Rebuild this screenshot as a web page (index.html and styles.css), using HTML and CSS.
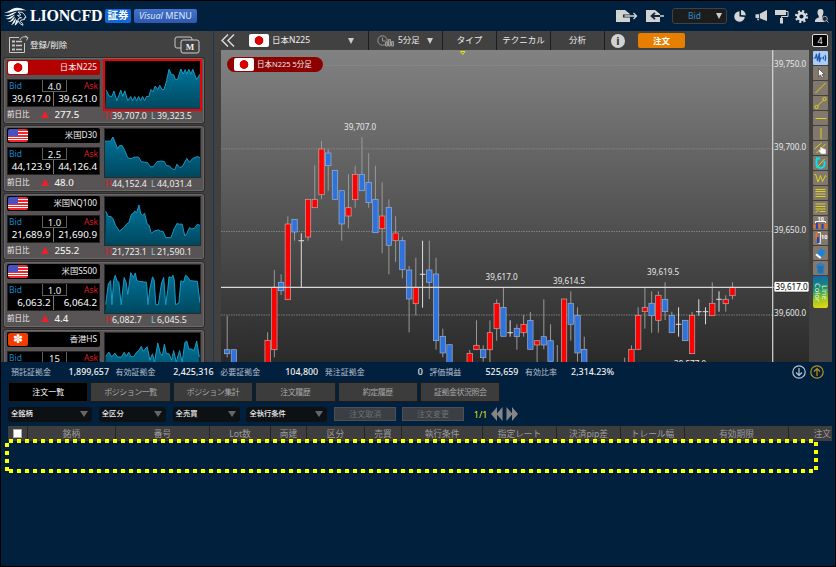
FILE: index.html
```html
<!DOCTYPE html>
<html lang="ja">
<head>
    <meta charset="UTF-8">
    <meta name="viewport" content="width=device-width, initial-scale=1.0">
    <title>LIONCFD証券</title>
    <link rel="stylesheet" href="styles.css">
</head>
<body>
    <div class="app">
        <header class="header">
            <svg class="lion" width="23" height="19" viewBox="0 0 23 19" fill="#f0f3f6">
                <path d="M0 5.500C5 5.500 7 1 13 .8c3.500 0 6 1.200 9.500 2.700C19 3 16 3 13.500 3.500 9 4.200 6 6.500 0 5.500z"/>
                <path d="M0 8.500c5 .5 8-3.500 13-3.800l-3 2C7 9 4 10 0 8.500z"/>
                <path d="M1.500 11.800C5 11.500 7 8.800 11 7.500L9 10c-2 2-4.500 2.800-7.500 1.800z"/>
                <path d="M4 15c3-.8 3.500-3.500 7-5.500l-1 2.500c-1.200 2-3 3.300-6 3z"/>
                <path d="M7 18c2-1.500 1.800-4.500 5-7l-.5 2.500C10.800 16 9.500 17.500 7 18z"/>
                <path d="M10.500 18.500c1-2 .6-4 2.500-6l1 2c-.3 2-1.500 3.500-3.500 4z"/>
                <path d="M14 5l4 .3 2.500 2.200 1.500 3-2 .5.600 1.500-3.600.5-.8 1.500 2.300 1.800.5 2-3.500-2-1.500-3 .5-1.800 3-.8-2-.5-2-1.700 3.500-.6z" fill="none" stroke="#f0f3f6" stroke-width=".9"/>
            </svg>
            <span class="brand">LIONCFD</span>
            <span class="brand-badge">証券</span>
            <span class="visual-menu"><i>Visual</i> MENU</span>
            <div class="header-tools">
                <svg class="t-out" width="22" height="14" viewBox="0 0 22 14"><path d="M0 1h9l5 4v8H0z" fill="#d2d2d2"/><path d="M7 7h8" stroke="#12273d" stroke-width="3"/><path d="M8.500 7h12M17.500 4l3 3-3 3" fill="none" stroke="#d2d2d2" stroke-width="1.300"/></svg>
                <svg class="t-in" width="19" height="14" viewBox="0 0 19 14"><path d="M0 1h9l5 4v8H0z" fill="#d2d2d2"/><path d="M6 7h8M9 3.800L5.500 7 9 10.200" fill="none" stroke="#12273d" stroke-width="1.800"/><path d="M14 7h4" stroke="#d2d2d2" stroke-width="1.500"/></svg>
                <div class="price-select"><span>Bid</span><b class="arrow"></b></div>
                <svg class="t-pie" width="12" height="12" viewBox="0 0 12 12" fill="#d6d6d6"><path d="M5.500 1.200V6.500l5.300.6A5.300 5.300 0 1 1 5.500 1.200z"/><path d="M7 0a5 5 0 0 1 4.600 5.400L7 5z"/></svg>
                <svg class="t-horn" width="13" height="12" viewBox="0 0 13 12" fill="#d2d2d2"><path d="M12 0v11L4.800 8.300V3.700z"/><path d="M.5 4.300h3.500v3.700H.5zM2 8.500h1.600l.6 1.800H2.600z"/></svg>
                <svg class="t-roller" width="14" height="15" viewBox="0 0 14 15" fill="#d2d2d2"><path d="M0 1h11v5H0z"/><path d="M11 2.500h2v5H6.500V9" fill="none" stroke="#d2d2d2"/><path d="M5 9h3v5.500H5z"/></svg>
                <svg class="t-gear" width="13" height="13" viewBox="0 0 13 13"><circle cx="6.500" cy="6.500" r="3.400" fill="none" stroke="#dcdcdc" stroke-width="2.600"/><circle cx="6.500" cy="6.500" r="5.400" fill="none" stroke="#dcdcdc" stroke-width="2.200" stroke-dasharray="2.100 2.140"/></svg>
                <svg class="t-user" width="14" height="14" viewBox="0 0 14 14"><path d="M5.500 0C8 0 8.600 1.600 8.400 3.500 8.200 5.500 7.600 6.300 7.300 7v1.500L9 9.500V13H0c0-3 .6-3.400 3.700-4.600V7C3 6 2.500 5 2.500 3.300 2.500 1.200 3.600 0 5.500 0z" fill="#d2d2d2"/><circle cx="9.800" cy="9.800" r="2.500" fill="#12273d" stroke="#aaa"/><path d="M11.500 11.500l2 2" stroke="#aaa"/></svg>
            </div>
        </header>

        <main class="main">
            <section class="watch">
                <div class="watch-head">
                    <svg width="21" height="19" viewBox="0 0 21 19" fill="none" stroke="#c8c8c8"><path d="M11 2.500H1.500v15h15V8"/><path d="M4 5.500h3v2H4zM4 9.500h3v2H4zM4 13.500h3v2H4z" fill="#c8c8c8" stroke="none"/><path d="M8 6.500h6M8 10.500h6M8 14.500h6" stroke-width="1.600"/><path d="M12 5c1-3 4-4 7.500-2.500M17 .8l3 1.800-1.500 2.800"/></svg>
                    <span>登録/削除</span>
                    <svg class="m-icon" width="27" height="18" viewBox="0 0 27 18"><rect x="1" y="1" width="17" height="11" rx="2" fill="#414141" stroke="#c8c8c8"/><rect x="7" y="4" width="18" height="13" rx="2" fill="#414141" stroke="#d0d0d0"/><text x="16" y="14" text-anchor="middle">M</text></svg>
                </div>
                <div class="cards" id="cards"></div>
            </section>

            <section class="chart-area">
                <div class="chart-bar">
                    <svg class="back" width="14" height="13" viewBox="0 0 14 13" fill="none" stroke="#ddd" stroke-width="1.400"><path d="M7 .5l-6 6 6 6M13 .5l-6 6 6 6"/></svg>
                    <div class="bar-item symbol"><i class="flag jp"></i><span>日本N225</span><b class="arrow"></b></div>
                    <div class="bar-item period">
                        <svg width="18" height="12" viewBox="0 0 18 12" fill="none" stroke="#999"><circle cx="5.500" cy="5.500" r="4.700"/><path d="M5.500 2.500v3.500h3"/><path d="M8.500 11V7h2v4zM11.500 11V4.500h2V11zM14.500 11V6.500h2V11z" fill="#666"/></svg>
                        <span>5分足</span><b class="arrow"></b>
                    </div>
                    <div class="bar-item type">タイプ</div>
                    <div class="bar-item type">テクニカル</div>
                    <div class="bar-item type">分析</div>
                    <span class="info">i</span>
                    <button class="order-btn">注文</button>
                    <span class="count">4</span>
                </div>
                <div class="chart-row">
                    <div class="chart">
                        <svg id="chart" width="588" height="312" viewBox="221 50 588 312"></svg>
                        <div class="chart-pill"><i class="flag jp"></i>日本N225 5分足</div>
                    </div>
                    <div class="draw-tools">
                        <svg class="on" viewBox="0 0 14 14"><path d="M0 7h2l1-4 1 7 2-8v9l1-4h2M10 5.500v3M11.500 4q1.500 3 0 6" stroke="#2257a8" stroke-width="1.200"/></svg>
                        <svg viewBox="0 0 14 14"><path d="M5 2.500v8l2-1.500 1.500 3 1.500-.8L8.500 8.500h2.500z" fill="#fff" stroke="#333" stroke-width=".6"/></svg>
                        <svg viewBox="0 0 14 14"><path d="M2 12L12 2"/></svg>
                        <svg viewBox="0 0 14 14"><path d="M4 10l6-6"/><circle cx="3" cy="11" r="1.600"/><circle cx="11" cy="3" r="1.600"/></svg>
                        <svg viewBox="0 0 14 14"><path d="M2 7.500h11"/></svg>
                        <svg viewBox="0 0 14 14"><path d="M7.500 2v11"/></svg>
                        <svg viewBox="0 0 14 14"><path d="M1 8l7-6M3 12l9-9"/><path d="M7 6.500l2 1 3 1v4H7.500L5.500 9.500h2z" fill="#fff" stroke="#fff" stroke-width=".5"/></svg>
                        <svg viewBox="0 0 14 14"><path d="M3 12l8-9"/><path d="M2.500 2.500h4M3 3v5a4 4 0 0 0 8 0V5" stroke="#00e5f0" stroke-width="2"/></svg>
                        <svg viewBox="0 0 14 14"><path d="M1 4l1-1 2.500 8L7 4.500l2 6 3-6 1 1"/></svg>
                        <svg viewBox="0 0 14 14"><path d="M2 3.500h10M2 5.500h10M2 8h10M2 10.500h10"/></svg>
                        <svg viewBox="0 0 14 14"><path d="M2 3h10M2 5.500h10M2 8h10M6 10.500h6M2 12l3-3"/></svg>
                        <svg viewBox="0 0 14 14"><path d="M2 7V5.500h10V7" stroke="#fff"/><path d="M3.500 7v6M9 8v5" stroke="#1c48c8" stroke-width="2"/><path d="M6 8v4M12 8v4M1 9v3" stroke="#ff6a13" stroke-width="2"/><text x="4" y="4.500">10</text></svg>
                        <svg viewBox="0 0 14 14"><path d="M4 1.500h3v11H5" stroke="#fff" stroke-width=".8"/><path d="M3 2v6" stroke="#ff6a13" stroke-width="2"/><path d="M4.500 6v6" stroke="#1c48c8" stroke-width="2"/><text x="7.500" y="8">10</text></svg>
                        <svg viewBox="0 0 14 14"><path d="M7.500 2L12 6l-4 5.500L3.500 7.500z" fill="#1584e0" stroke="none"/><path d="M3.500 7.500L8 11.500l-1.500 1.300L1.800 9z" fill="#fff" stroke="none"/></svg>
                        <svg viewBox="0 0 14 14"><path d="M3.500 4.500h7l-.8 8H4.300zM3 3.500h8M5.500 2.500h3" fill="#2a6ea8" stroke="#2f7fc0"/></svg>
                        <div class="line-color">Line<br>Color</div>
                    </div>
                </div>
            </section>
        </main>

        <section class="status">
            <div class="stat"><span>預託証拠金</span><b>1,899,657</b></div>
            <div class="stat"><span>有効証拠金</span><b>2,425,316</b></div>
            <div class="stat"><span>必要証拠金</span><b>104,800</b></div>
            <div class="stat"><span>発注証拠金</span><b>0</b></div>
            <div class="stat short"><span>評価損益</span><b>525,659</b></div>
            <div class="stat short"><span>有効比率</span><b>2,314.23%</b></div>
            <div class="updown">
                <svg width="14" height="14" viewBox="0 0 14 14" fill="none" stroke="#b8c6d6" stroke-width="1.200"><circle cx="7" cy="7" r="6.200"/><path d="M7 3v7.500M4 7.500l3 3 3-3"/></svg>
                <svg width="14" height="14" viewBox="0 0 14 14" fill="none" stroke="#b8901e" stroke-width="1.200"><circle cx="7" cy="7" r="6.200"/><path d="M7 11V3.500M4 6.500l3-3 3 3"/></svg>
            </div>
        </section>

        <nav class="tabs">
            <a class="tab active">注文一覧</a>
            <a class="tab">ポジション一覧</a>
            <a class="tab">ポジション集計</a>
            <a class="tab">注文履歴</a>
            <a class="tab">約定履歴</a>
            <a class="tab">証拠金状況照会</a>
        </nav>

        <div class="filters">
            <div class="select w84">全銘柄<b class="arrow"></b></div>
            <div class="select w67">全区分<b class="arrow"></b></div>
            <div class="select w67">全売買<b class="arrow"></b></div>
            <div class="select w81">全執行条件<b class="arrow"></b></div>
            <button class="off-btn">注文取消</button>
            <button class="off-btn">注文変更</button>
            <span class="page">1/1</span>
            <svg class="pager" width="27" height="14" viewBox="0 0 27 14" fill="#858585"><path d="M6 0v14L0 7zM11.500 0v14l-6-7zM15.500 0v14l6-7zM21 0v14l6-7z"/></svg>
        </div>

        <div class="orders">
            <div class="thead">
                <span><i class="check"></i></span><span>銘柄</span><span>番号</span><span>Lot数</span><span>両建</span><span>区分</span><span>売買</span><span>執行条件</span><span>指定レート</span><span>決済pip差</span><span>トレール幅</span><span>有効期限</span><span class="last">注文</span>
            </div>
            <svg class="marker" width="813" height="34" viewBox="0 0 813 34" stroke="#ffff00" stroke-width="4" stroke-dasharray="4 4">
                <path d="M4 2H808M4 32H808M2 4V32M811 3V31"/>
            </svg>
        </div>
    </div>
    <script src="script.js"></script>
</body>
</html>
```
FILE: styles.css
```css
* {
    margin: 0;
    padding: 0;
    box-sizing: border-box;
}

body {
    width: 836px;
    height: 567px;
    overflow: hidden;
    background: #000;
    font-family: "Noto Sans", "Noto Sans CJK JP", sans-serif;
    font-size: 8.5px;
    line-height: 1;
    color: #eee;
}

svg {
    display: block;
    flex: none;
}

.app {
    margin: 1px;
    width: 834px;
    height: 565px;
    background: #01203d;
    display: flex;
    flex-direction: column;
}

.arrow {
    width: 0;
    height: 0;
    border: 3.5px solid transparent;
    border-top: 6px solid #ccc;
    border-bottom: 0;
}

/* header */
.header {
    height: 30px;
    flex: none;
    display: flex;
    align-items: center;
    padding-left: 3px;
}

.brand {
    font: bold 16px/16px "Liberation Serif", serif;
    color: #fff;
    margin-left: 3px;
    width: 74px;
    letter-spacing: -0.2px;
}

.brand-badge {
    width: 26px;
    height: 14px;
    margin-left: 1px;
    border-radius: 2px;
    background: #1268d6;
    color: #fff;
    font-size: 10.5px;
    font-weight: bold;
    line-height: 13px;
    text-align: center;
}

.visual-menu {
    width: 63px;
    height: 14px;
    margin-left: 3px;
    border-radius: 2px;
    background: linear-gradient(#4474cc, #2d58b0);
    color: #dfe9f8;
    font-size: 9px;
    line-height: 14px;
    text-align: center;
    white-space: nowrap;
}

.header-tools {
    margin-left: auto;
    margin-right: 6px;
    display: flex;
    align-items: center;
}

.t-out { margin-right: 8px; }
.t-in { margin-right: 7px; }
.t-pie { margin-right: 9px; }
.t-horn { margin-right: 7px; }
.t-roller { margin-right: 6px; }
.t-gear { margin-right: 7px; }

.price-select {
    width: 55px;
    height: 16px;
    margin-right: 7px;
    border: 1px solid #3b4249;
    border-radius: 3px;
    background: #1c1c1c;
    color: #2f8dc4;
    font-size: 8.5px;
    display: flex;
    align-items: center;
    justify-content: space-between;
    padding: 0 4px 0 15px;
}

.main {
    height: 331px;
    flex: none;
    display: flex;
    background: #414141;
    margin-right: 3px;
}

/* left list */
.watch {
    width: 213px;
    height: 331px;
    overflow: hidden;
    border-right: 1px solid #1b3850;
    padding-left: 3px;
}

.watch-head {
    height: 27px;
    display: flex;
    align-items: center;
    padding: 0 12px 0 4px;
    font-size: 8.5px;
}

.watch-head span {
    margin: 2px 0 0 1px;
}

.m-icon {
    margin-left: auto;
    margin-top: 1px;
}

.m-icon text {
    font: bold 9px "Liberation Serif", serif;
    fill: #eee;
}

.card {
    width: 200px;
    height: 65px;
    margin-bottom: 3px;
    background: #585455;
    border: 1px solid #6b6868;
    border-radius: 2px;
    outline: 1px solid #2d2b2b;
    display: grid;
    grid-template-columns: 93px 97px;
    gap: 4px;
    padding: 1px 2px;
}

.name {
    height: 15px;
    background: #000;
    border-radius: 2px;
    display: flex;
    align-items: center;
    justify-content: space-between;
    padding: 0 3px 0 1px;
    font-size: 8.3px;
}

.active .name {
    background: #b50000;
}

.flag {
    width: 20px;
    height: 13px;
    border-radius: 2px;
    overflow: hidden;
    flex: none;
}

.jp {
    background: radial-gradient(circle at 50% 50%, #d80000 4px, #fff 4.700px);
}

.us {
    background: linear-gradient(#4a50c0, #4a50c0) 0 0 / 10px 7px no-repeat, linear-gradient(#f02630 2px, #fff 2px 3px, #f02630 3px 5px, #fff 5px 6px, #f02630 6px 8px, #fff 8px 9px, #f02630 9px 10px, #fff 10px 11px, #f02630 11px);
}

.hk {
    background: #f13c00;
    color: #fff;
    font: 12px/12px "DejaVu Sans", sans-serif;
    text-align: center;
}

.quote {
    height: 28px;
    margin-top: 4px;
    background: #000;
    border: 1px solid #242424;
    display: grid;
    grid-template-columns: 34px 25px 1fr;
    grid-template-rows: 12px 14px;
}

.quote .bid {
    color: #1a86c4;
    font-size: 8.5px;
    line-height: 11px;
    padding-left: 1px;
}

.quote .ask {
    color: #d91e2a;
    font-size: 8.5px;
    line-height: 11px;
    text-align: right;
    padding-right: 1px;
}

.spread {
    border: 1px solid #5e5e5e;
    border-top: 0;
    text-align: center;
    font-size: 9.5px;
    line-height: 13px;
}

.prices {
    grid-column: 1 / 4;
    display: grid;
    grid-template-columns: 1fr 1fr;
    font-size: 9.8px;
    line-height: 14px;
    text-align: right;
    color: #fff;
}

.prices span {
    padding-right: 2px;
}

.prices span:first-child {
    border-right: 1px solid #777;
}

.change {
    height: 14px;
    padding-top: 1px;
    display: flex;
    align-items: center;
    font-size: 7.5px;
}

.up {
    margin: 0 6px 0 11px;
    border: 4.5px solid transparent;
    border-top: 0;
    border-bottom: 7px solid #f01e28;
}

.change b {
    font-size: 9.7px;
    font-weight: 500;
}

.spark {
    width: 97px;
    height: 50px;
    background: #000;
    border: 1px solid #2a2a2a;
}

.active .spark {
    border: 1px solid #f00000;
    outline: 0.5px solid #f00000;
}

.hl {
    display: grid;
    grid-template-columns: 46px 50px;
    font-size: 8.8px;
    line-height: 12px;
    padding-left: 1px;
    white-space: nowrap;
}

.hl i {
    font-style: normal;
    display: inline-block;
    width: 7px;
    color: #e01820;
}

.hl span + span i {
    color: #8cc8d8;
    width: 6px;
}

/* chart */
.chart-area {
    flex: 1;
    padding-left: 7px;
}

.chart-bar {
    height: 19px;
    display: flex;
    align-items: center;
}

.back {
    margin-right: 14px;
}

.bar-item {
    height: 19px;
    border-right: 1px solid #1d1d1d;
    display: flex;
    align-items: center;
    white-space: nowrap;
}

.symbol { width: 120px; gap: 3px; }
.symbol .arrow { margin-left: auto; margin-right: 14px; }
.period { width: 74px; padding-left: 8px; gap: 3px; }
.period .arrow { margin-left: auto; margin-right: 9px; }
.type { width: 54px; justify-content: center; }

.info {
    width: 14px;
    height: 14px;
    margin-left: 6px;
    border-radius: 50%;
    background: #d2d2d2;
    color: #333;
    font: bold 11px/14px "Noto Sans", sans-serif;
    text-align: center;
}

.order-btn {
    width: 47px;
    height: 15px;
    margin-left: 13px;
    border: 0;
    border-radius: 2px;
    background: #e67e00;
    color: #fff;
    font: bold 8.5px/15px "Noto Sans CJK JP", sans-serif;
}

.count {
    width: 16px;
    height: 13px;
    margin-left: auto;
    margin-right: 4px;
    border: 1px solid #ddd;
    border-radius: 2px;
    background: #000;
    font-size: 9px;
    line-height: 11px;
    text-align: center;
}

.chart-row {
    display: flex;
    height: 312px;
}

.chart {
    width: 588px;
    position: relative;
    background: linear-gradient(#828282, #2a2a2a);
}

.grid { stroke: #8d8d8d; stroke-dasharray: 1.500 1; stroke-width: 0.8; }
.now { stroke: #d8d8d8; stroke-width: 1.200; }
.wick { stroke: #999; }
.doji { stroke: #ddd; }
.rise { fill: #fe0000; stroke: #bdaaaa; stroke-width: 0.7; }
.fall { fill: #2e72dc; stroke: #9fb0cc; stroke-width: 0.7; }
.axis { font-size: 8.1px; fill: #e8e8e8; }
.now-text { font-size: 8.1px; fill: #000; }

.chart-pill {
    position: absolute;
    left: 6px;
    top: 7px;
    width: 96px;
    height: 15px;
    border-radius: 8px;
    background: #8c0000;
    display: flex;
    align-items: center;
    gap: 3px;
    padding-left: 7px;
    font-size: 7.5px;
    white-space: nowrap;
}

.draw-tools {
    padding: 1px 0 0 4px;
    display: flex;
    flex-direction: column;
    gap: 1px;
}

.draw-tools svg {
    width: 15px;
    height: 14px;
    background: #82796c;
    border-radius: 1px;
    fill: none;
    stroke: #d9d020;
}

.draw-tools .on {
    background: #a9cdfa;
}

.draw-tools text {
    font: bold 5.500px "Noto Sans", sans-serif;
    fill: #fff;
    stroke: none;
}

.line-color {
    width: 15px;
    height: 32px;
    border-radius: 2px;
    background: linear-gradient(170deg, #1266b0, #1b8f68 40%, #9cc61c 70%, #e8dc18);
    writing-mode: vertical-rl;
    font-size: 7.5px;
    line-height: 7px;
    text-align: center;
    color: #e8f4e8;
}

/* account row */
.status {
    height: 20px;
    flex: none;
    display: flex;
    align-items: center;
    gap: 6.6px;
    padding-left: 10px;
    font-size: 8px;
    color: #b4bfcb;
    white-space: nowrap;
}

.stat {
    width: 98px;
    display: flex;
    align-items: center;
    justify-content: space-between;
}

.short {
    width: 89px;
}

.stat b {
    font-size: 8.9px;
    font-weight: 500;
    color: #f0f0f0;
}

.updown {
    margin-left: auto;
    margin-right: 11px;
    display: flex;
    gap: 4px;
}

.tabs {
    height: 20px;
    flex: none;
    display: flex;
    gap: 2px;
    padding-left: 7px;
}

.tab {
    width: 80.4px;
    height: 20px;
    background: #3c3c3c;
    border: 1px solid #1b1b1b;
    color: #a8a8a8;
    font-size: 8px;
    line-height: 18px;
    text-align: center;
    letter-spacing: -0.5px;
}

.tab.active {
    background: #000;
    color: #fff;
    letter-spacing: 0;
}

.filters {
    height: 24px;
    flex: none;
    display: flex;
    align-items: center;
    gap: 6.8px;
    padding-left: 7px;
}

.select {
    height: 15px;
    background: #0e1114;
    border-radius: 3px;
    display: flex;
    align-items: center;
    justify-content: space-between;
    padding: 0 4px 0 3px;
    font-size: 7.3px;
    font-weight: 500;
}

.select .arrow {
    border-width: 6px 4.5px 0;
    border-top-color: #666;
}

.w84 { width: 84px; }
.w67 { width: 67px; }
.w81 { width: 81px; }

.off-btn {
    width: 62px;
    height: 14px;
    background: #3b3f43;
    border: 1px solid #4b5056;
    color: #6d7175;
    font: 8px/12px "Noto Sans CJK JP", sans-serif;
}

.off-btn + .off-btn {
    margin-left: -1px;
}

.page {
    margin-left: 3px;
    color: #e4e41c;
    font-size: 9px;
}

.pager {
    margin-left: -3px;
}

/* orders */
.orders {
    position: relative;
    margin-right: 3px;
}

.thead {
    height: 15px;
    margin-left: 7px;
    overflow: hidden;
    background: #3e3e3e;
    display: grid;
    grid-template-columns: 20px 88px 94px 61px 36px 58px 37px 81px 74px 64px 64px 104px 43px;
    color: #9c9c9c;
    font-size: 8.7px;
    line-height: 16px;
    text-align: center;
    white-space: nowrap;
}

.thead span {
    border-right: 1px solid #252525;
}

.thead .last {
    text-align: right;
    border: 0;
    padding-right: 1px;
}

.check {
    display: block;
    width: 9px;
    height: 9px;
    margin: 3px 0 0 5px;
    background: #fff;
    border: 1px solid #aaa;
}

.marker {
    position: absolute;
    left: 4px;
    top: 13px;
}
```
FILE: script.js
```js
const cards = [
    { name: '日本N225', flag: 'jp', active: true, spread: '4.0', bid: '39,617.0', ask: '39,621.0', diff: '277.5', high: '39,707.0', low: '39,323.5',
      line: '4,91 12,109 21,111 27,94 36,124 48,91 54,111 60,93 69,124 78,111 84,124 90,111 96,124 102,111 108,124 114,111 120,124 126,111 133,111 139,89 146,96 152,78 160,89 166,76 173,89 179,89 187,61 194,26 202,43 208,43 214,59 220,57 230,25 237,41 243,27 248,41 254,26 260,41 266,26 272,43 278,58 288,41' },
    { name: '米国D30', flag: 'us', spread: '2.5', bid: '44,123.9', ask: '44,126.4', diff: '48.0', high: '44,152.4', low: '44,031.4',
      line: '0,38 17,38 24,25 32,45 38,62 44,52 52,52 60,67 68,88 74,92 82,92 88,88 102,88 110,102 120,104 128,104 138,118 146,118 152,110 158,102 172,100 180,102 186,114 196,116 204,125 212,127 218,110 226,120 234,118 248,92 256,104 266,92 280,86 288,90' },
    { name: '米国NQ100', flag: 'us', spread: '1.0', bid: '21,689.9', ask: '21,690.9', diff: '255.2', high: '21,723.1', low: '21,590.1',
      line: '2,44 10,61 18,61 24,67 32,89 44,107 58,95 66,84 72,81 80,54 86,51 90,44 96,49 103,25 108,51 114,57 120,51 128,85 134,89 140,114 148,107 162,103 168,107 176,107 184,127 200,127 210,99 218,83 226,85 234,85 242,122 248,114 256,96 262,99 270,99 280,85 288,89' },
    { name: '米国S500', flag: 'us', spread: '1.0', bid: '6,063.2', ask: '6,064.2', diff: '4.4', high: '6,082.7', low: '6,045.5',
      line: '2,124 10,59 17,49 21,124 26,49 31,32 36,49 42,54 49,124 58,39 64,54 69,92 73,64 78,24 86,39 92,25 96,47 102,51 126,54 130,124 136,74 144,37 149,47 154,124 162,124 168,79 172,54 178,39 184,124 190,79 194,37 202,39 206,32 210,47 214,124 224,119 230,49 238,54 244,32 252,39 258,49 280,51 288,119' },
    { name: '香港HS', flag: 'hk', spread: '15',
      line: '2,73 12,60 20,75 30,63 38,75 50,75 58,60 64,73 72,60 78,73 86,75 96,60 102,55 110,42 116,57 128,43 136,85 144,65 150,91 160,31 168,65 174,70 180,35 186,65 194,65 202,85 208,55 216,91 226,55 234,91 242,30 248,25 254,50 262,50 270,55 278,25 286,75' }
];

document.getElementById('cards').innerHTML = cards.map(c => `
    <div class="card ${c.active ? 'active' : ''}">
        <div>
            <div class="name"><i class="flag ${c.flag}">${c.flag === 'hk' ? '✽' : ''}</i>${c.name}</div>
            <div class="quote">
                <span class="bid">Bid</span><span class="spread">${c.spread}</span><span class="ask">Ask</span>
                ${c.bid ? `<div class="prices"><span>${c.bid}</span><span>${c.ask}</span></div>` : ''}
            </div>
            ${c.diff ? `<div class="change">前日比<i class="up"></i><b>${c.diff}</b></div>` : ''}
        </div>
        <div>
            <svg class="spark" viewBox="0 0 288 150" preserveAspectRatio="none">
                <defs><linearGradient id="sea" x1="0" y1="0" x2="0" y2="1"><stop offset="0" stop-color="#007398"/><stop offset="1" stop-color="#00485f"/></linearGradient></defs>
                <polygon points="0,150 ${c.line} 288,150" fill="url(#sea)"/>
                <polyline points="${c.line}" fill="none" stroke="#1c9cc8" stroke-width="3"/>
            </svg>
            ${c.high ? `<div class="hl"><span><i>H</i>${c.high}</span><span><i>L</i>${c.low}</span></div>` : ''}
        </div>
    </div>`).join('');

// [slot, kind, high, body top, body bottom, low]
const candles = [
    [0, 'fall', 315.7, 349.7, 353.7, 357.3], [1, 'fall', 349.7, 349.7, 370, 370],
    [6, 'rise', 332.3, 340.3, 370, 370], [7, 'rise', 270, 287.3, 349.7, 357.3],
    [8, 'fall', 274.3, 282.3, 290.7, 295], [9, 'rise', 216.3, 224, 299.7, 299.7],
    [10, 'fall', 219.3, 219.3, 232, 240.7], [11, 'doji', 233.3, 240.7, 240.7, 287.3],
    [12, 'rise', 199.3, 199.3, 237, 240.7], [13, 'rise', 165.3, 199.3, 207.7, 207.7],
    [14, 'rise', 141, 149, 194.7, 199.3], [15, 'fall', 149.3, 153, 165.7, 190.7],
    [16, 'fall', 170.3, 170.3, 199.3, 199.3], [17, 'fall', 190.7, 190.7, 224, 240.7],
    [18, 'rise', 174.3, 207.7, 216, 228.3], [19, 'rise', 165.7, 174.3, 199.7, 207.7],
    [20, 'fall', 137, 174.3, 190.7, 190.7], [21, 'fall', 153, 182.3, 202.7, 207.7],
    [22, 'fall', 165.7, 199.3, 232.7, 232.7], [23, 'rise', 182.3, 216, 228.7, 253.3],
    [24, 'fall', 199.3, 207.3, 245.3, 274.3], [25, 'rise', 216.3, 233, 240.7, 262],
    [26, 'fall', 236.7, 240.7, 269.7, 278.3], [27, 'fall', 266, 270, 299, 332.3],
    [28, 'rise', 257.7, 287.3, 303.7, 315.3], [29, 'doji', 240.7, 274.3, 274.3, 307.7],
    [30, 'fall', 240.7, 270, 282.3, 299], [31, 'fall', 257.7, 274, 340.7, 349.7],
    [32, 'fall', 328.7, 336.3, 353, 357.3], [33, 'fall', 344.7, 344.7, 370, 370],
    [36, 'rise', 350, 353.3, 370, 370], [37, 'rise', 320.3, 345.3, 349.7, 349.7],
    [38, 'fall', 345.3, 349.3, 357.7, 361.7], [39, 'rise', 320.3, 332.7, 349.7, 362],
    [40, 'rise', 299.3, 303.3, 328.7, 340.7], [41, 'fall', 287.3, 307.3, 336.3, 336.3],
    [42, 'doji', 320.3, 332.7, 332.7, 336.7], [43, 'fall', 324.3, 328.3, 336.7, 349.7],
    [44, 'rise', 315, 324.3, 332.7, 336.7], [45, 'fall', 312, 320.3, 349.3, 349.3],
    [46, 'rise', 340.7, 340.7, 345, 370], [47, 'fall', 299.3, 336.7, 345, 349.3],
    [48, 'fall', 324.3, 340.7, 361.3, 361.3], [49, 'wick', 345, 370, 370, 370],
    [50, 'rise', 299, 299, 370, 370], [51, 'fall', 291.3, 303.3, 324.3, 340.7],
    [52, 'fall', 307.3, 315.3, 353, 361.7], [53, 'fall', 336.7, 349.3, 370, 370],
    [59, 'wick', 357.7, 370, 370, 370], [60, 'rise', 345.3, 349.3, 370, 370],
    [61, 'rise', 307.3, 315.3, 349.3, 349.3], [62, 'rise', 287.3, 307.3, 311.7, 328.7],
    [63, 'fall', 291.3, 303.3, 315.7, 332.7], [64, 'rise', 291.3, 295.3, 320.3, 332.7],
    [65, 'fall', 282.3, 299.3, 311.7, 320], [66, 'fall', 311.7, 315.3, 332.7, 332.7],
    [67, 'doji', 307.3, 324.3, 324.3, 336.7], [68, 'fall', 320.3, 320.3, 340.7, 340.7],
    [69, 'rise', 312, 315.3, 353.7, 353.7], [70, 'doji', 299.3, 311.7, 311.7, 315.7],
    [71, 'doji', 307.3, 311.7, 311.7, 324.3], [72, 'rise', 282.3, 303.3, 315.7, 315.7],
    [73, 'doji', 291.3, 299.3, 299.3, 311.7], [74, 'rise', 295.3, 299.3, 303.7, 311.7],
    [75, 'rise', 282.3, 287.3, 295.7, 299.3]
];

let out = '';
[['39,750.0', 65.5], ['39,700.0', 148.8], ['39,650.0', 231.5], ['39,600.0', 315]].forEach(([t, y]) => {
    out += `<line class="grid" x1="221" x2="772" y1="${y}" y2="${y}"/><text class="axis" x="774" y="${y + 1}">${t}</text>`;
});

candles.forEach(([i, kind, high, top, bottom, low]) => {
    const x = 227.2 + i * 6.737;
    out += `<line class="${kind === 'doji' ? 'doji' : 'wick'}" x1="${x}" x2="${x}" y1="${high}" y2="${low}"/>`;
    if (kind === 'doji') {
        out += `<line class="doji" x1="${x - 2.8}" x2="${x + 2.8}" y1="${top}" y2="${top}"/>`;
    } else if (kind !== 'wick') {
        out += `<rect class="${kind}" x="${x - 2.7}" y="${top}" width="5.4" height="${bottom - top}"/>`;
    }
});

[['39,707.0', 344, 129.5], ['39,617.0', 485.5, 279.5], ['39,614.5', 553, 283.5], ['39,619.5', 647, 274.5], ['39,577.0', 674, 367]].forEach(([t, x, y]) => {
    out += `<text class="axis" x="${x}" y="${y}">${t}</text>`;
});

out += '<line class="now" x1="221" x2="774" y1="287.4" y2="287.4"/><line class="now" x1="772.7" x2="772.7" y1="50" y2="362"/>';
out += '<rect x="774" y="281.5" width="35" height="10.5" rx="1.5" fill="#fff" stroke="#222" stroke-width=".6"/><text class="now-text" x="775.5" y="289.6">39,617.0</text>';
out += '<path d="M460.5 51.5h4.5l-2.2 3z" fill="none" stroke="#e6e600"/>';
document.getElementById('chart').innerHTML = out;
```
